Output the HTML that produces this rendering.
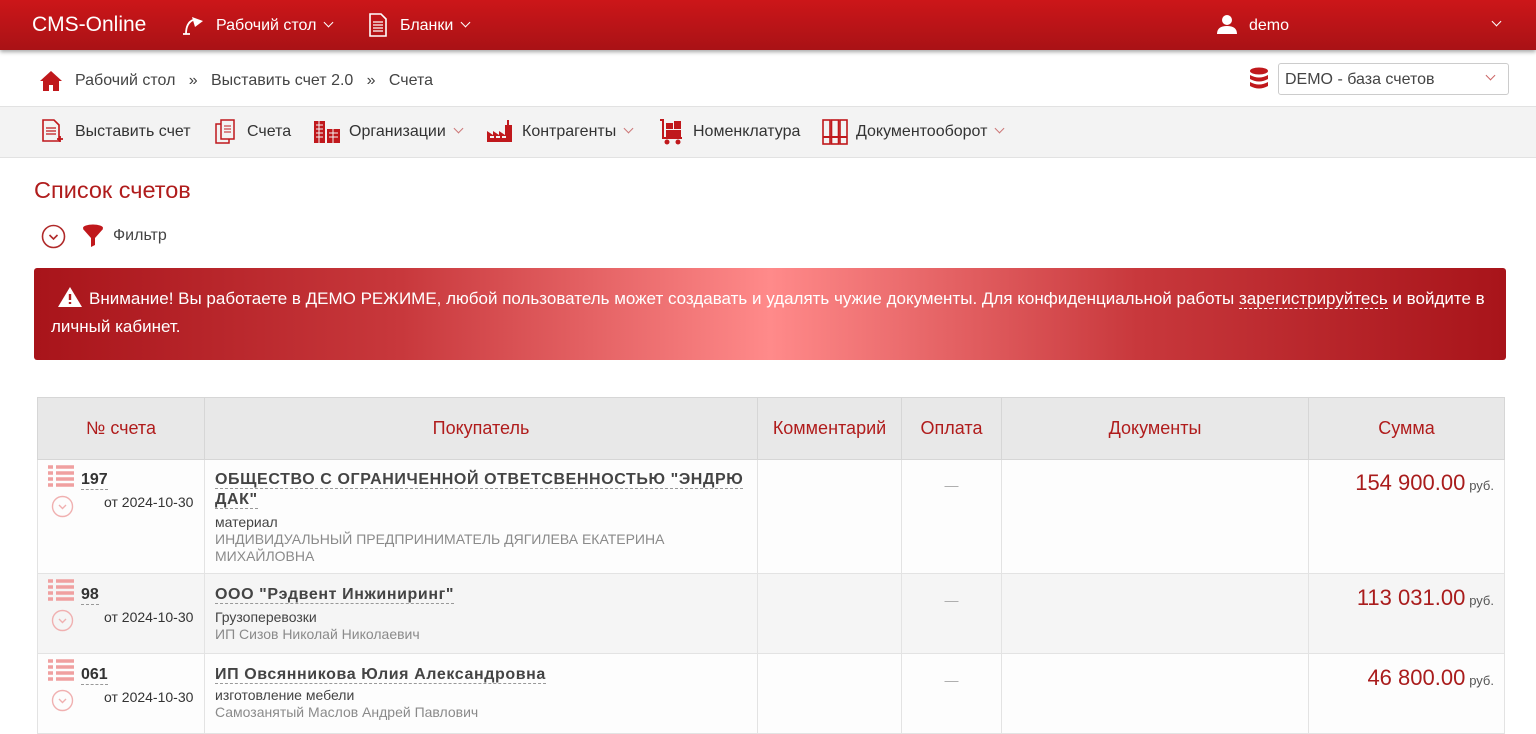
<!DOCTYPE html>
<html><head><meta charset="utf-8"><style>
*{margin:0;padding:0;box-sizing:border-box}
body{width:1536px;height:733px;overflow:hidden;font-family:"Liberation Sans",sans-serif;background:#fff;color:#333;position:relative}
.abs{position:absolute}
.nav{left:0;top:0;width:1536px;height:50px;background:linear-gradient(#cc1619,#a91216);box-shadow:0 2px 4px rgba(0,0,0,.35)}
.nav span{position:absolute;color:#fff;font-size:16px}
.bc{top:72px;font-size:16px;color:#444}
.tb{left:0;top:106px;width:1536px;height:52px;background:#f3f3f3;border-top:1px solid #e2e2e2;border-bottom:1px solid #e2e2e2}
.tb span{position:absolute;top:16px;font-size:16px;color:#333}
.chev{display:inline-block;width:7px;height:7px;border-right:1.6px solid currentColor;border-bottom:1.6px solid currentColor;transform:rotate(45deg);margin-left:9px;position:relative;top:-4px}
.alert{left:34px;top:268px;width:1472px;height:92px;border-radius:3px;background:linear-gradient(90deg,#a8141a 0%,#c8383c 25%,#ff8a8a 50%,#c8383c 75%,#a8141a 100%);color:#fff;font-size:17px;line-height:28px;padding:17px 17px 17px 17px}
table{position:absolute;left:37px;top:397px;border-collapse:collapse;width:1468px}
th{height:62px;background:#e8e8e8;color:#b01c1c;font-weight:normal;font-size:18px;border:1px solid #d6d6d6}
td{border:1px solid #e3e3e3;vertical-align:top;font-size:14px;padding-bottom:0!important}
.r1 td{height:114px;background:#fdfdfd}.r2 td{height:80px;background:#f5f5f5}.r3 td{height:80px;background:#fdfdfd}
.num{font-weight:bold;font-size:16px;color:#333;border-bottom:1px dashed #999}
.cust{font-weight:bold;font-size:16px;color:#444;letter-spacing:.6px}
.cust b{border-bottom:1px dashed #999;font-weight:bold}
.sub{color:#444;font-size:14px;line-height:17px}
.gr{color:#8a8a8a;font-size:14px;line-height:17px}
.sum{color:#a91c1c;font-size:22px}
.rub{font-size:13px;color:#555}
</style></head><body>
<div class="abs nav">
<span style="left:32px;top:13px;font-size:21px">CMS-Online</span>
<svg class="abs" style="left:181px;top:15px" width="26" height="20" viewBox="0 0 26 20"><path d="M2 19 H9 M5 19 Q5 8 12 5" stroke="#fff" stroke-width="1.8" fill="none"/><path d="M11 2 L22 6 L14 12 Z" fill="#fff"/></svg>
<span style="left:216px;top:17px">Рабочий стол<i class="chev"></i></span>
<svg class="abs" style="left:369px;top:13px" width="18" height="24" viewBox="0 0 18 24"><path d="M1 1H12L17 6V23H1Z" fill="none" stroke="#fff" stroke-width="1.6"/><path d="M4 9H14M4 12H14M4 15H14M4 18H14" stroke="#fff" stroke-width="1.2"/></svg>
<span style="left:400px;top:17px">Бланки<i class="chev"></i></span>
<svg class="abs" style="left:1216px;top:14px" width="22" height="20" viewBox="0 0 22 20"><circle cx="11" cy="6" r="5" fill="#fff"/><path d="M1 20Q1 12 11 12Q21 12 21 20Z" fill="#fff"/></svg>
<span style="left:1249px;top:17px">demo</span>
<span style="left:1484px;top:16px"><i class="chev"></i></span>
</div>
<svg class="abs" style="left:39px;top:70px" width="24" height="22" viewBox="0 0 24 22"><path d="M12 1L1 11H4V21H10V15H14V21H20V11H23Z" fill="#c0181c"/></svg>
<div class="abs bc" style="left:75px">Рабочий стол &nbsp;&nbsp;» &nbsp;&nbsp;Выставить счет 2.0 &nbsp;&nbsp;» &nbsp;&nbsp;Счета</div>
<svg class="abs" style="left:1249px;top:67px" width="20" height="24" viewBox="0 0 20 24"><ellipse cx="10" cy="4" rx="9" ry="3.5" fill="#c0181c"/><path d="M1 8Q10 13 19 8V12Q10 17 1 12Z M1 15Q10 20 19 15V19Q10 24 1 19Z" fill="#c0181c"/></svg>
<div class="abs" style="left:1278px;top:63px;width:231px;height:32px;border:1px solid #ccc;border-radius:3px;font-size:16px;color:#444;padding:7px 0 0 6px">DEMO - база счетов<span style="position:absolute;right:14px;top:6px;color:#c66"><i class="chev" style="margin:0"></i></span></div>
<div class="abs tb">
<svg class="abs" style="left:42px;top:12px" width="22" height="26" viewBox="0 0 22 26"><path d="M1 1H12L17 6V22H1Z" fill="none" stroke="#c0181c" stroke-width="1.6"/><path d="M4 9H14M4 12H14M4 15H14" stroke="#c0181c" stroke-width="1.2"/><path d="M15 20H21M18 17V23" stroke="#c0181c" stroke-width="1.8"/></svg>
<span style="left:75px">Выставить счет</span>
<svg class="abs" style="left:215px;top:12px" width="22" height="26" viewBox="0 0 22 26"><rect x="1" y="5" width="13" height="19" fill="none" stroke="#c0181c" stroke-width="1.5"/><rect x="6" y="1" width="13" height="19" fill="#f3f3f3" stroke="#c0181c" stroke-width="1.5"/><path d="M9 7H16M9 10H16M9 13H16" stroke="#c0181c"/></svg>
<span style="left:247px">Счета</span>
<svg class="abs" style="left:313px;top:13px" width="28" height="24" viewBox="0 0 28 24"><rect x="1" y="1" width="11" height="22" fill="#c0181c"/><rect x="14" y="9" width="13" height="14" fill="#c0181c"/><path d="M3 5H10M3 9H10M3 13H10M3 17H10M16 13H25M16 17H25M6 1V23M20 9V23" stroke="#f3f3f3" stroke-width="1"/></svg>
<span style="left:349px">Организации<i class="chev" style="color:#c77"></i></span>
<svg class="abs" style="left:486px;top:12px" width="27" height="24" viewBox="0 0 27 24"><path d="M1 23V12L7 16V12L13 16V12L19 16V6H21V1H23V6H26V23Z" fill="#c0181c"/><path d="M4 18H8M10 18H14M16 18H20" stroke="#f3f3f3" stroke-width="2"/></svg>
<span style="left:522px">Контрагенты<i class="chev" style="color:#c77"></i></span>
<svg class="abs" style="left:658px;top:11px" width="26" height="28" viewBox="0 0 26 28"><path d="M2 2H5V20H24" stroke="#c0181c" stroke-width="2" fill="none"/><rect x="8" y="5" width="7" height="6" fill="#c0181c"/><rect x="16" y="3" width="7" height="8" fill="#c0181c"/><rect x="8" y="12" width="15" height="7" fill="#c0181c"/><circle cx="9" cy="24" r="2.5" fill="#c0181c"/><circle cx="20" cy="24" r="2.5" fill="#c0181c"/></svg>
<span style="left:693px">Номенклатура</span>
<svg class="abs" style="left:822px;top:12px" width="26" height="26" viewBox="0 0 26 26"><g fill="none" stroke="#c0181c" stroke-width="1.6"><rect x="1" y="1" width="7" height="24"/><rect x="9.5" y="1" width="7" height="24"/><rect x="18" y="1" width="7" height="24"/></g><path d="M1 18H25" stroke="#c0181c" stroke-width="2"/></svg>
<span style="left:856px">Документооборот<i class="chev" style="color:#c77"></i></span>
</div>
<div class="abs" style="left:34px;top:177px;font-size:23.5px;color:#b01c1c">Список счетов</div>
<svg class="abs" style="left:41px;top:224px" width="25" height="25" viewBox="0 0 25 25"><circle cx="12.5" cy="12.5" r="11" fill="none" stroke="#b02a2a" stroke-width="1.6"/><path d="M8.5 11L12.5 15L16.5 11" fill="none" stroke="#b02a2a" stroke-width="1.6"/></svg>
<svg class="abs" style="left:82px;top:224px" width="22" height="24" viewBox="0 0 22 24"><ellipse cx="11" cy="4" rx="10" ry="3.5" fill="#c0181c"/><path d="M1 5L9 14V23L13 21V14L21 5Z" fill="#c0181c"/></svg>
<div class="abs" style="left:113px;top:227px;font-size:16px;color:#444">Фильтр</div>
<div class="abs alert"><svg width="26" height="22" viewBox="0 0 26 22" style="vertical-align:-4px;margin:0 6px 0 6px"><path d="M13 1L25 21H1Z" fill="#fff"/><path d="M13 8V14M13 16V18" stroke="#b01c1c" stroke-width="2.4"/></svg>Внимание! Вы работаете в ДЕМО РЕЖИМЕ, любой пользователь может создавать и удалять чужие документы. Для конфиденциальной работы <span style="border-bottom:1px dashed #fff">зарегистрируйтесь</span> и войдите в личный кабинет.</div>
<table>
<tr><th style="width:167px">№ счета</th><th style="width:553px">Покупатель</th><th style="width:144px">Комментарий</th><th style="width:100px">Оплата</th><th style="width:307px">Документы</th><th>Сумма</th></tr>
<tr class="r1"><td><div style="position:relative;height:60px"><svg class="abs" style="left:10px;top:5px" width="26" height="22" viewBox="0 0 26 22"><path d="M0 2H5M8 2H26M0 8H5M8 8H26M0 14H5M8 14H26M0 20H5M8 20H26" stroke="#f0a0a0" stroke-width="3.4"/></svg><svg class="abs" style="left:13px;top:35px" width="23" height="23" viewBox="0 0 23 23"><circle cx="11.5" cy="11.5" r="10" fill="none" stroke="#f0b0b0" stroke-width="1.4"/><path d="M8 10L11.5 13.5L15 10" fill="none" stroke="#f0b0b0" stroke-width="1.4"/></svg><span class="num abs" style="left:43px;top:11px">197</span><span class="abs" style="left:66px;top:34px">от 2024-10-30</span></div></td>
<td style="padding:10px 10px"><div class="cust" style="line-height:20px"><b>ОБЩЕСТВО С ОГРАНИЧЕННОЙ ОТВЕТСВЕННОСТЬЮ "ЭНДРЮ ДАК"</b></div><div class="sub" style="margin-top:4px">материал</div><div class="gr">ИНДИВИДУАЛЬНЫЙ ПРЕДПРИНИМАТЕЛЬ ДЯГИЛЕВА ЕКАТЕРИНА МИХАЙЛОВНА</div></td>
<td></td><td style="text-align:center;color:#aaa;padding-top:17px">—</td><td></td><td style="text-align:right;padding:10px 10px"><span class="sum">154 900.00</span> <span class="rub">руб.</span></td></tr>
<tr class="r2"><td><div style="position:relative;height:60px"><svg class="abs" style="left:10px;top:5px" width="26" height="22" viewBox="0 0 26 22"><path d="M0 2H5M8 2H26M0 8H5M8 8H26M0 14H5M8 14H26M0 20H5M8 20H26" stroke="#f0a0a0" stroke-width="3.4"/></svg><svg class="abs" style="left:13px;top:35px" width="23" height="23" viewBox="0 0 23 23"><circle cx="11.5" cy="11.5" r="10" fill="none" stroke="#f0b0b0" stroke-width="1.4"/><path d="M8 10L11.5 13.5L15 10" fill="none" stroke="#f0b0b0" stroke-width="1.4"/></svg><span class="num abs" style="left:43px;top:12px">98</span><span class="abs" style="left:66px;top:35px">от 2024-10-30</span></div></td>
<td style="padding:11px 10px"><div class="cust" style="line-height:20px"><b>ООО "Рэдвент Инжиниринг"</b></div><div class="sub" style="margin-top:4px">Грузоперевозки</div><div class="gr">ИП Сизов Николай Николаевич</div></td>
<td></td><td style="text-align:center;color:#aaa;padding-top:18px">—</td><td></td><td style="text-align:right;padding:11px 10px"><span class="sum">113 031.00</span> <span class="rub">руб.</span></td></tr>
<tr class="r3"><td><div style="position:relative;height:60px"><svg class="abs" style="left:10px;top:5px" width="26" height="22" viewBox="0 0 26 22"><path d="M0 2H5M8 2H26M0 8H5M8 8H26M0 14H5M8 14H26M0 20H5M8 20H26" stroke="#f0a0a0" stroke-width="3.4"/></svg><svg class="abs" style="left:13px;top:35px" width="23" height="23" viewBox="0 0 23 23"><circle cx="11.5" cy="11.5" r="10" fill="none" stroke="#f0b0b0" stroke-width="1.4"/><path d="M8 10L11.5 13.5L15 10" fill="none" stroke="#f0b0b0" stroke-width="1.4"/></svg><span class="num abs" style="left:43px;top:12px">061</span><span class="abs" style="left:66px;top:35px">от 2024-10-30</span></div></td>
<td style="padding:11px 10px"><div class="cust" style="line-height:20px"><b>ИП Овсянникова Юлия Александровна</b></div><div class="sub" style="margin-top:2px">изготовление мебели</div><div class="gr">Самозанятый Маслов Андрей Павлович</div></td>
<td></td><td style="text-align:center;color:#aaa;padding-top:18px">—</td><td></td><td style="text-align:right;padding:11px 10px"><span class="sum">46 800.00</span> <span class="rub">руб.</span></td></tr>
</table>
</body></html>
